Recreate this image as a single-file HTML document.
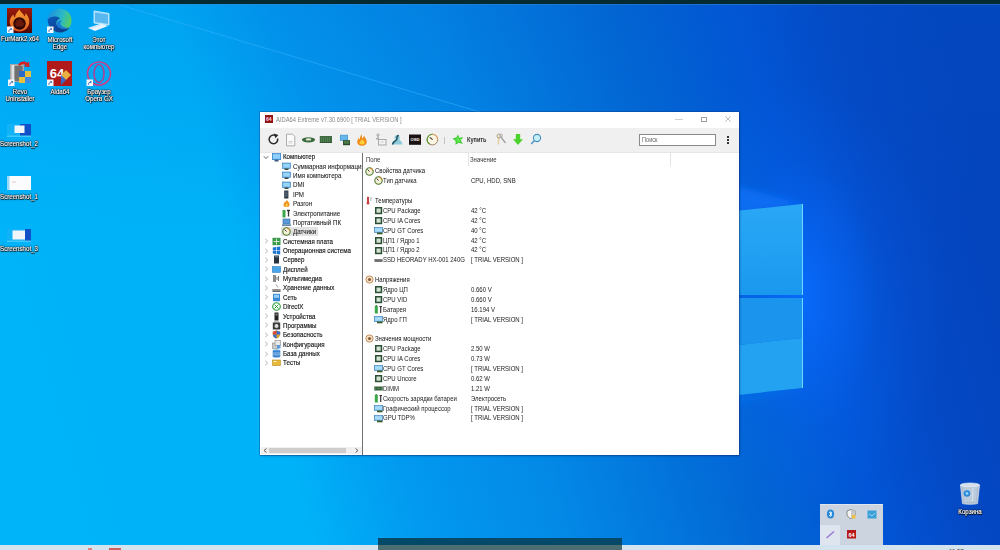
<!DOCTYPE html><html><head><meta charset="utf-8"><style>
*{margin:0;padding:0;box-sizing:border-box}
html,body{width:1000px;height:550px;overflow:hidden}
body{position:relative;font-family:"Liberation Sans",sans-serif;background:#0a78e0}
.a{position:absolute}
#wall{position:absolute;left:0;top:0;width:1000px;height:550px}
#topbar{position:absolute;left:0;top:0;width:1000px;height:4px;background:#032b31;border-bottom:0px}
#taskbar{position:absolute;left:0;top:545px;width:1000px;height:5px;background:#dbe4ec}
.dl{position:absolute;color:#fff;font-size:6.6px;line-height:8px;text-align:center;white-space:nowrap;transform:scaleX(0.93);-webkit-text-stroke:0.15px #fff;text-shadow:0 0 1px #000,0 0 1px #000,0 0 1px #000,0.5px 0.5px 1px #000,0 0 2px #013}
#win{position:absolute;left:260px;top:112px;width:479px;height:343px;background:#fff;overflow:hidden;box-shadow:0 0 0 0.6px rgba(20,50,110,.5),1px 1px 2px rgba(0,20,80,.35)}
.t{position:absolute;font-size:7.6px;line-height:9px;color:#1a1a1a;white-space:nowrap;transform:scaleX(0.79);transform-origin:0 50%}
.b{font-weight:bold}
</style></head><body>
<svg id="wall" width="1000" height="550" viewBox="0 0 1000 550">
<defs>
<linearGradient id="g0" gradientUnits="userSpaceOnUse" x1="0" y1="0" x2="1000" y2="0" gradientTransform="rotate(-15 500 275)">
<stop offset="0" stop-color="#00b4fa"/>
<stop offset="0.25" stop-color="#00b2f8"/>
<stop offset="0.30" stop-color="#01a6f4"/>
<stop offset="0.36" stop-color="#0299f0"/>
<stop offset="0.50" stop-color="#0388e6"/>
<stop offset="0.69" stop-color="#0265d3"/>
<stop offset="0.80" stop-color="#0255d6"/>
<stop offset="0.89" stop-color="#0448c4"/>
<stop offset="1" stop-color="#0444bc"/>
</linearGradient>
<linearGradient id="pane" x1="0" y1="0" x2="0" y2="1">
<stop offset="0" stop-color="#2aa8f6"/><stop offset="1" stop-color="#1a98ee"/>
</linearGradient>
<linearGradient id="pane2" x1="0" y1="0" x2="0" y2="1">
<stop offset="0" stop-color="#1a96ee"/><stop offset="0.45" stop-color="#1c9cf2"/><stop offset="0.5" stop-color="#2cb0fa"/><stop offset="1" stop-color="#30b2fa"/>
</linearGradient>
</defs>
<rect width="1000" height="550" fill="url(#g0)"/>
<linearGradient id="topd" x1="0" y1="0" x2="0" y2="1"><stop offset="0" stop-color="#0058c8" stop-opacity="0.16"/><stop offset="1" stop-color="#0058c8" stop-opacity="0"/></linearGradient>
<rect x="0" y="0" width="1000" height="230" fill="url(#topd)"/>
<path d="M120 5 L480 112" stroke="#3ab8ff" stroke-opacity="0.5" stroke-width="1" fill="none"/>
<radialGradient id="glow" cx="803" cy="296" r="100" gradientUnits="userSpaceOnUse" gradientTransform="translate(803 296) scale(0.75 1.35) translate(-803 -296)"><stop offset="0" stop-color="#0a6cff" stop-opacity="0.75"/><stop offset="0.45" stop-color="#0a6cff" stop-opacity="0.35"/><stop offset="1" stop-color="#0a6cff" stop-opacity="0"/></radialGradient>
<rect x="690" y="150" width="230" height="300" fill="url(#glow)"/>
<filter id="bl" x="-20%" y="-50%" width="140%" height="200%"><feGaussianBlur stdDeviation="3"/></filter>
<radialGradient id="glow2" cx="790" cy="300" r="200" gradientUnits="userSpaceOnUse" gradientTransform="translate(790 300) scale(0.8 1.1) translate(-790 -300)"><stop offset="0" stop-color="#0a6cff" stop-opacity="0.4"/><stop offset="1" stop-color="#0a6cff" stop-opacity="0"/></radialGradient>
<rect x="600" y="60" width="400" height="480" fill="url(#glow2)"/>
<polygon points="600,149 803,204 600,232" fill="#0c76ff" fill-opacity="0.6" filter="url(#bl)"/>
<polygon points="600,440 803,388 600,412" fill="#0a74f0" fill-opacity="0.45" filter="url(#bl)"/>
<polygon points="600,225 802,204 802,295 600,295" fill="url(#pane)"/>
<polygon points="600,298 802,298 802,338 600,360" fill="#1a94ec"/>
<polygon points="600,360 802,338 802,388 600,410" fill="#24a2f2"/>
<line x1="802.5" y1="204" x2="802.5" y2="295" stroke="#70d8ff" stroke-width="1"/>
<line x1="802.5" y1="298" x2="802.5" y2="388" stroke="#70d8ff" stroke-width="1"/>
</svg>
<div id="topbar"></div><div class="a" style="left:0;top:4px;width:1000px;height:1px;background:rgba(60,140,210,.45)"></div>
<div id="win">
<div class="a" style="left:5px;top:3px;width:8px;height:8px;background:#901414"></div>
<div class="a" style="left:6px;top:4px;font-size:5px;line-height:6px;color:#fde;font-weight:bold">64</div>
<div class="t" style="left:16px;top:3px;color:#8a8a8a;font-size:7px;transform:scaleX(0.83)">AIDA64 Extreme v7.30.6900  [ TRIAL VERSION ]</div>
<div class="a" style="left:415px;top:7px;width:8px;height:1px;background:#d0d0d0"></div>
<div class="a" style="left:441px;top:4.5px;width:6px;height:5.5px;border:1px solid #a0a0a0"></div>
<svg class="a" style="left:464.8px;top:4.4px" width="6" height="6"><path d="M0.3 0.3L5.7 5.7M5.7 0.3L0.3 5.7" stroke="#a8a8a8" stroke-width="0.8"/></svg>
<div class="a" style="left:0;top:16px;width:479px;height:25px;background:#f0f0f0;border-bottom:1px solid #e6e6e6"></div>
<svg class="a" style="left:7px;top:21px" width="13" height="13" viewBox="0 0 13 13"><path d="M8.6 2.7A4.3 4.3 0 1 0 10.6 5.5" stroke="#2a2a2a" stroke-width="1.5" fill="none"/><path d="M7 0.6L11.4 2L8.4 5.2Z" fill="#2a2a2a"/></svg>
<svg class="a" style="left:25px;top:21px" width="11" height="14" viewBox="0 0 11 14"><path d="M1.5 1.2H7.5L9.8 3.5V12.8H1.5Z" fill="#fafafa" stroke="#9a9a9a" stroke-width="0.8"/><path d="M3.5 8.5h4M3.5 10h4" stroke="#c8c8c8" stroke-width="0.8"/></svg>
<svg class="a" style="left:41px;top:24px" width="15" height="8" viewBox="0 0 15 8"><ellipse cx="7.5" cy="3.8" rx="6.6" ry="2.6" fill="#3d6a3d"/><ellipse cx="7.5" cy="3.4" rx="2.8" ry="1.2" fill="#dfe8d8"/></svg>
<svg class="a" style="left:59px;top:23px" width="14" height="9" viewBox="0 0 14 9"><rect x="0.8" y="1" width="12.2" height="6.8" fill="#3e6a40"/><path d="M2.5 2v5M4.5 2v5M6.5 2v5M8.5 2v5M10.5 2v5" stroke="#5a8a5a" stroke-width="0.7"/><rect x="0.8" y="7" width="12.2" height="0.8" fill="#2a4a2a"/></svg>
<svg class="a" style="left:79px;top:22px" width="12" height="12" viewBox="0 0 12 12"><rect x="1" y="0.8" width="8" height="6" fill="#4a9ad8"/><rect x="1.8" y="1.5" width="6.4" height="4.4" fill="#6ab8ea"/><rect x="4" y="6.2" width="7" height="5" fill="#2a4a2a"/><rect x="4.8" y="7" width="5.4" height="2.8" fill="#4a7a4a"/></svg>
<svg class="a" style="left:96px;top:22px" width="12" height="12" viewBox="0 0 12 12"><path d="M5.5 0.3C6.2 2 5.2 3 6.8 4.5C7 3.2 7.8 2.5 8.2 1.8C8.5 3.5 10.8 5 10.8 8C10.8 10.3 8.8 11.8 6 11.8C3.2 11.8 1.2 10.3 1.2 8C1.2 6.2 2.2 5 2.8 3.8C3.2 4.8 3.5 5.2 4 5.5C3.8 3.5 4.5 1.8 5.5 0.3Z" fill="#f08c1c"/><path d="M6.2 5.2C7.5 6.5 8.8 7.5 8.5 9.2C8.2 10.6 3.8 10.6 3.6 9.2C3.4 7.8 4.8 7.2 5 6.2C5.5 7 6 6.5 6.2 5.2Z" fill="#ffd23a"/></svg>
<svg class="a" style="left:115px;top:21px" width="12" height="13" viewBox="0 0 12 13"><path d="M3 1.5v4" stroke="#999" stroke-width="1"/><circle cx="3" cy="2" r="1.2" fill="none" stroke="#aaa" stroke-width="0.8"/><rect x="1" y="5" width="3" height="1.5" fill="#aaa"/><rect x="3.5" y="6.5" width="7.5" height="5.5" fill="#f4f4f4" stroke="#a0a0a0" stroke-width="0.9"/><path d="M5 9h4" stroke="#ccc" stroke-width="0.8"/></svg>
<svg class="a" style="left:131px;top:22px" width="12" height="11" viewBox="0 0 12 11"><path d="M0.8 10.5C1 8 2.5 6.5 4.5 6C3.5 5 3.3 3.5 3.8 2.5C4.5 1 6.5 0.5 7.8 1.5C9 2.5 9 4.5 8.2 5.8C10 6.5 11.2 8.2 11.3 10.5Z" fill="#8ccadc"/><path d="M7.8 1.5C6.5 1.5 5.5 3 6 4.5C6.2 5.5 5.2 6.5 4 7.2C2.5 8 1.8 9.2 1.5 10.5" stroke="#1d4858" stroke-width="1.4" fill="none"/></svg>
<svg class="a" style="left:148px;top:22px" width="14" height="11" viewBox="0 0 14 11"><rect x="1" y="0.5" width="12" height="10.3" fill="#1a1210"/><text x="7" y="7.3" font-family="Liberation Sans" font-size="4.2" font-weight="bold" fill="#fff" text-anchor="middle">OSD</text></svg>
<svg class="a" style="left:166px;top:21px" width="13" height="13" viewBox="0 0 13 13"><circle cx="6.4" cy="6.6" r="5.3" fill="#fbf6e4" stroke="#a08060" stroke-width="1"/><path d="M6.4 1.3A5.3 5.3 0 0 0 1.1 6.6A5.3 5.3 0 0 0 4 11.3" stroke="#5a9a3a" stroke-width="1.1" fill="none"/><path d="M6.4 1.3A5.3 5.3 0 0 1 11.7 6.6" stroke="#e0a060" stroke-width="1.1" fill="none"/><path d="M6.6 6.6L3.8 4.4" stroke="#333" stroke-width="1.1"/></svg>
<div class="a" style="left:183.5px;top:24.5px;width:1px;height:7px;background:#c4c4c4"></div>
<svg class="a" style="left:192px;top:22px" width="12" height="11" viewBox="0 0 12 11"><path d="M6 0.5L7.3 3.8L11.2 3.2L8.8 6.3L10.8 10L6.8 8.7L3.5 10.8L3.6 7L0.5 4.5L4.3 3.6Z" fill="#42c832"/><path d="M6 2.5L7 4.8L9.5 4.6L7.9 6.4L9 8.6L6.6 7.8L4.6 9L4.8 6.8L2.8 5.2L5 4.6Z" fill="#5ce84a"/></svg>
<div class="t" style="left:207.2px;top:23.4px;font-weight:bold;font-size:6.5px;transform:scaleX(0.86);color:#333">Купить</div>
<svg class="a" style="left:235px;top:21px" width="12" height="13" viewBox="0 0 12 13"><path d="M3.5 4v7.5" stroke="#e8d0a0" stroke-width="1.6"/><circle cx="4" cy="3" r="2" fill="none" stroke="#b0a080" stroke-width="1"/><path d="M5.5 3.5L10.5 10" stroke="#a0a0a0" stroke-width="1.3"/><circle cx="6" cy="2.5" r="1.5" fill="none" stroke="#aaa" stroke-width="0.8"/></svg>
<svg class="a" style="left:252px;top:21px" width="12" height="13" viewBox="0 0 12 13"><path d="M3.8 1H8.2V6.2H11L6 12L1 6.2H3.8Z" fill="#4cd22c"/></svg>
<svg class="a" style="left:270px;top:21px" width="12" height="12" viewBox="0 0 12 12"><circle cx="7" cy="5" r="3.6" fill="#c4f0fa" stroke="#4a90c0" stroke-width="1.1"/><path d="M4.3 7.8L1.2 11" stroke="#4a90c0" stroke-width="1.4"/></svg>
<div class="a" style="left:379px;top:21.5px;width:77px;height:12px;background:#fff;border:1px solid #8a8a8a"></div>
<div class="t" style="left:381.5px;top:23px;font-size:6.5px;transform:scaleX(0.86);color:#666">Поиск</div>
<div class="a" style="left:466.5px;top:24px;width:2px;height:2px;background:#333"></div>
<div class="a" style="left:466.5px;top:27px;width:2px;height:2px;background:#333"></div>
<div class="a" style="left:466.5px;top:30px;width:2px;height:2px;background:#333"></div>
<div class="a" style="left:1px;top:41px;width:101px;height:302px;background:#fff"></div>
<div class="a" style="left:102px;top:41px;width:1px;height:303px;background:#707070"></div>
<div class="a" style="left:1px;top:335px;width:101px;height:7px;background:#f0f0f0"></div>
<div class="a" style="left:9px;top:336px;width:77px;height:5px;background:#cdcdcd"></div>
<svg class="a" style="left:3px;top:336px" width="5" height="5"><path d="M3.5 0.5L1 2.5L3.5 4.5" stroke="#606060" stroke-width="1" fill="none"/></svg>
<svg class="a" style="left:94px;top:336px" width="5" height="5"><path d="M1.5 0.5L4 2.5L1.5 4.5" stroke="#606060" stroke-width="1" fill="none"/></svg>
<div class="a" style="left:1px;top:41px;width:101px;height:294px;overflow:hidden">
<svg class="a" style="left:2px;top:1.5px" width="6" height="5"><path d="M0.8 1.2L3 3.6L5.2 1.2" stroke="#555" stroke-width="0.9" fill="none"/></svg>
<svg class="a" style="left:10.5px;top:-0.5px" width="9" height="9" viewBox="0 0 9 9"><rect x="0.3" y="0.5" width="8.4" height="6.2" fill="#4aa8ea" stroke="#2a78c0" stroke-width="0.6"/><rect x="1" y="1.2" width="7" height="4.6" fill="#8ed0fa"/><rect x="2.5" y="6.7" width="4" height="1.8" fill="#3a5a7a"/></svg>
<div class="t" style="left:21.5px;top:-0.6px;color:#111;font-size:7.6px;transform:scaleX(0.816);-webkit-text-stroke:0.15px #111">Компьютер</div>
<svg class="a" style="left:20.5px;top:8.86px" width="9" height="9" viewBox="0 0 9 9"><rect x="0.5" y="1" width="8" height="5.5" fill="#5aaee6" stroke="#3a7cb8" stroke-width="0.6"/><rect x="1.2" y="1.8" width="6.6" height="3.8" fill="#9ad4f8"/><rect x="2.5" y="6.5" width="4" height="1.5" fill="#3a4a3a"/></svg>
<div class="t" style="left:31.8px;top:8.76px;font-size:7.6px;transform:scaleX(0.816);-webkit-text-stroke:0.08px #222;color:#222">Суммарная информация</div>
<svg class="a" style="left:20.5px;top:18.22px" width="9" height="9" viewBox="0 0 9 9"><rect x="0.5" y="1" width="8" height="5.5" fill="#5aaee6" stroke="#3a7cb8" stroke-width="0.6"/><rect x="1.2" y="1.8" width="6.6" height="3.8" fill="#9ad4f8"/><rect x="2.5" y="6.5" width="4" height="1.5" fill="#3a4a3a"/></svg>
<div class="t" style="left:31.8px;top:18.12px;font-size:7.6px;transform:scaleX(0.816);-webkit-text-stroke:0.08px #222;color:#222">Имя компьютера</div>
<svg class="a" style="left:20.5px;top:27.58px" width="9" height="9" viewBox="0 0 9 9"><rect x="0.5" y="1" width="8" height="5.5" fill="#5aaee6" stroke="#3a7cb8" stroke-width="0.6"/><rect x="1.2" y="1.8" width="6.6" height="3.8" fill="#9ad4f8"/><rect x="2.5" y="6.5" width="4" height="1.5" fill="#3a4a3a"/></svg>
<div class="t" style="left:31.8px;top:27.48px;font-size:7.6px;transform:scaleX(0.816);-webkit-text-stroke:0.08px #222;color:#222">DMI</div>
<svg class="a" style="left:20.5px;top:36.94px" width="9" height="9" viewBox="0 0 9 9"><rect x="2.2" y="0.5" width="4.2" height="8" fill="#2a3440"/><rect x="2.9" y="1.3" width="2.8" height="5.5" fill="#4a5a6a"/></svg>
<div class="t" style="left:31.8px;top:36.84px;font-size:7.6px;transform:scaleX(0.816);-webkit-text-stroke:0.08px #222;color:#222">IPM</div>
<svg class="a" style="left:20.5px;top:46.3px" width="9" height="9" viewBox="0 0 9 9"><path d="M4.5 0.5C6 2.5 8 4 7.5 6.5C7 8.5 2 8.5 1.5 6.5C1 4.5 3 4 2.8 2.5C4 3.5 4.8 2 4.5 0.5Z" fill="#f09020"/><path d="M4.5 4C5.5 5 6 6 5.5 7.2C5 8 3.8 8 3.5 7.2C3.2 6.2 4 5.5 4.5 4Z" fill="#ffd24a"/></svg>
<div class="t" style="left:31.8px;top:46.2px;font-size:7.6px;transform:scaleX(0.816);-webkit-text-stroke:0.08px #222;color:#222">Разгон</div>
<svg class="a" style="left:20.5px;top:55.66px" width="9" height="9" viewBox="0 0 9 9"><rect x="0.5" y="1" width="3" height="7.5" fill="#3aa84a"/><path d="M5 1.5h3M6.5 1.5v6" stroke="#333" stroke-width="1.3"/></svg>
<div class="t" style="left:31.8px;top:55.56px;font-size:7.6px;transform:scaleX(0.816);-webkit-text-stroke:0.08px #222;color:#222">Электропитание</div>
<svg class="a" style="left:20.5px;top:65.02px" width="9" height="9" viewBox="0 0 9 9"><rect x="1" y="1" width="7" height="5" fill="#5a9ad8" stroke="#3a6aa0" stroke-width="0.6"/><rect x="0" y="6.3" width="9" height="1.8" fill="#6a8ab0"/></svg>
<div class="t" style="left:31.8px;top:64.92px;font-size:7.6px;transform:scaleX(0.816);-webkit-text-stroke:0.08px #222;color:#222">Портативный ПК</div>
<div class="a" style="left:20px;top:74.38px;width:37px;height:9px;background:#e2e2e2"></div>
<svg class="a" style="left:20.5px;top:74.38px" width="9" height="9" viewBox="0 0 9 9"><circle cx="4.5" cy="4.5" r="3.7" fill="#f4f0d8" stroke="#4e7a2e" stroke-width="1.1"/><path d="M4.5 4.5L2.5 2.5" stroke="#222" stroke-width="0.9"/><path d="M5 1.2A3.3 3.3 0 0 1 7.8 4" stroke="#e08a2a" stroke-width="1" fill="none"/></svg>
<div class="t" style="left:31.8px;top:74.28px;font-size:7.6px;transform:scaleX(0.816);-webkit-text-stroke:0.08px #222;color:#222">Датчики</div>
<svg class="a" style="left:3px;top:85.24px" width="5" height="6"><path d="M1.2 0.8L3.6 3L1.2 5.2" stroke="#a0a0a0" stroke-width="0.8" fill="none"/></svg>
<svg class="a" style="left:11px;top:83.74px" width="9" height="9" viewBox="0 0 9 9"><rect x="0.5" y="0.8" width="8" height="7.4" fill="#3a9a4a"/><path d="M1.5 4.5h6M4.5 1.5v6" stroke="#d8f0d8" stroke-width="0.9"/></svg>
<div class="t" style="left:21.7px;top:83.64px;font-size:7.6px;transform:scaleX(0.816);-webkit-text-stroke:0.15px #111;color:#111">Системная плата</div>
<svg class="a" style="left:3px;top:94.6px" width="5" height="6"><path d="M1.2 0.8L3.6 3L1.2 5.2" stroke="#a0a0a0" stroke-width="0.8" fill="none"/></svg>
<svg class="a" style="left:11px;top:93.1px" width="9" height="9" viewBox="0 0 9 9"><path d="M0.8 1.5L4 1v3.2H0.8zM4.6 0.9L8.2 0.4v3.8H4.6zM0.8 4.8H4V8L0.8 7.6zM4.6 4.8h3.6v3.8L4.6 8.1z" fill="#1a74d0"/></svg>
<div class="t" style="left:21.7px;top:93px;font-size:7.6px;transform:scaleX(0.816);-webkit-text-stroke:0.15px #111;color:#111">Операционная система</div>
<svg class="a" style="left:3px;top:103.96px" width="5" height="6"><path d="M1.2 0.8L3.6 3L1.2 5.2" stroke="#a0a0a0" stroke-width="0.8" fill="none"/></svg>
<svg class="a" style="left:11px;top:102.46px" width="9" height="9" viewBox="0 0 9 9"><rect x="2" y="0.5" width="5" height="8" fill="#2a3440"/><rect x="2.7" y="1.3" width="3.6" height="1" fill="#7a8a9a"/></svg>
<div class="t" style="left:21.7px;top:102.36px;font-size:7.6px;transform:scaleX(0.816);-webkit-text-stroke:0.15px #111;color:#111">Сервер</div>
<svg class="a" style="left:3px;top:113.32px" width="5" height="6"><path d="M1.2 0.8L3.6 3L1.2 5.2" stroke="#a0a0a0" stroke-width="0.8" fill="none"/></svg>
<svg class="a" style="left:11px;top:111.82px" width="9" height="9" viewBox="0 0 9 9"><rect x="0.3" y="1.5" width="8.4" height="6" fill="#4aa4e8" stroke="#2a74b8" stroke-width="0.5"/></svg>
<div class="t" style="left:21.7px;top:111.72px;font-size:7.6px;transform:scaleX(0.816);-webkit-text-stroke:0.15px #111;color:#111">Дисплей</div>
<svg class="a" style="left:3px;top:122.68px" width="5" height="6"><path d="M1.2 0.8L3.6 3L1.2 5.2" stroke="#a0a0a0" stroke-width="0.8" fill="none"/></svg>
<svg class="a" style="left:11px;top:121.18px" width="9" height="9" viewBox="0 0 9 9"><rect x="1" y="1" width="3" height="7" fill="#8a8a8a"/><path d="M5 3v3M6.5 2v5" stroke="#555" stroke-width="0.8"/></svg>
<div class="t" style="left:21.7px;top:121.08px;font-size:7.6px;transform:scaleX(0.816);-webkit-text-stroke:0.15px #111;color:#111">Мультимедиа</div>
<svg class="a" style="left:3px;top:132.04px" width="5" height="6"><path d="M1.2 0.8L3.6 3L1.2 5.2" stroke="#a0a0a0" stroke-width="0.8" fill="none"/></svg>
<svg class="a" style="left:11px;top:130.54px" width="9" height="9" viewBox="0 0 9 9"><path d="M4 0.5L6 3.5" stroke="#888" stroke-width="0.8"/><rect x="0.5" y="5" width="8" height="3" fill="#666"/><rect x="1" y="5.5" width="7" height="1" fill="#bbb"/></svg>
<div class="t" style="left:21.7px;top:130.44px;font-size:7.6px;transform:scaleX(0.816);-webkit-text-stroke:0.15px #111;color:#111">Хранение данных</div>
<svg class="a" style="left:3px;top:141.4px" width="5" height="6"><path d="M1.2 0.8L3.6 3L1.2 5.2" stroke="#a0a0a0" stroke-width="0.8" fill="none"/></svg>
<svg class="a" style="left:11px;top:139.9px" width="9" height="9" viewBox="0 0 9 9"><rect x="1" y="0.8" width="7" height="7.4" fill="#3a8ad8"/><rect x="2" y="1.8" width="5" height="3" fill="#9ad0f8"/></svg>
<div class="t" style="left:21.7px;top:139.8px;font-size:7.6px;transform:scaleX(0.816);-webkit-text-stroke:0.15px #111;color:#111">Сеть</div>
<svg class="a" style="left:3px;top:150.76px" width="5" height="6"><path d="M1.2 0.8L3.6 3L1.2 5.2" stroke="#a0a0a0" stroke-width="0.8" fill="none"/></svg>
<svg class="a" style="left:11px;top:149.26px" width="9" height="9" viewBox="0 0 9 9"><circle cx="4.5" cy="4.5" r="3.8" fill="#fff" stroke="#2a9a3a" stroke-width="1.1"/><path d="M2.5 2.5L6.5 6.5M6.5 2.5L2.5 6.5" stroke="#2a9a3a" stroke-width="1"/></svg>
<div class="t" style="left:21.7px;top:149.16px;font-size:7.6px;transform:scaleX(0.816);-webkit-text-stroke:0.15px #111;color:#111">DirectX</div>
<svg class="a" style="left:3px;top:160.12px" width="5" height="6"><path d="M1.2 0.8L3.6 3L1.2 5.2" stroke="#a0a0a0" stroke-width="0.8" fill="none"/></svg>
<svg class="a" style="left:11px;top:158.62px" width="9" height="9" viewBox="0 0 9 9"><rect x="2.5" y="0.5" width="4" height="8" fill="#222"/><rect x="3.3" y="1.5" width="2.4" height="2" fill="#777"/></svg>
<div class="t" style="left:21.7px;top:158.52px;font-size:7.6px;transform:scaleX(0.816);-webkit-text-stroke:0.15px #111;color:#111">Устройства</div>
<svg class="a" style="left:3px;top:169.48px" width="5" height="6"><path d="M1.2 0.8L3.6 3L1.2 5.2" stroke="#a0a0a0" stroke-width="0.8" fill="none"/></svg>
<svg class="a" style="left:11px;top:167.98px" width="9" height="9" viewBox="0 0 9 9"><rect x="0.8" y="1.5" width="7.4" height="7" fill="#3a3a3a"/><circle cx="4.5" cy="5" r="2" fill="#ddd"/><rect x="2" y="0.5" width="5" height="1.2" fill="#888"/></svg>
<div class="t" style="left:21.7px;top:167.88px;font-size:7.6px;transform:scaleX(0.816);-webkit-text-stroke:0.15px #111;color:#111">Программы</div>
<svg class="a" style="left:3px;top:178.84px" width="5" height="6"><path d="M1.2 0.8L3.6 3L1.2 5.2" stroke="#a0a0a0" stroke-width="0.8" fill="none"/></svg>
<svg class="a" style="left:11px;top:177.34px" width="9" height="9" viewBox="0 0 9 9"><path d="M4.5 0.5L8.2 1.8V4.5C8.2 6.5 6.5 7.8 4.5 8.6C2.5 7.8 0.8 6.5 0.8 4.5V1.8Z" fill="#d8a030"/><path d="M4.5 0.5L8.2 1.8V4.5H4.5zM0.8 4.5H4.5V8.6C2.5 7.8 0.8 6.5 0.8 4.5z" fill="#3a6ac8"/><path d="M4.5 0.5L0.8 1.8V4.5H4.5z" fill="#d84a3a"/></svg>
<div class="t" style="left:21.7px;top:177.24px;font-size:7.6px;transform:scaleX(0.816);-webkit-text-stroke:0.15px #111;color:#111">Безопасность</div>
<svg class="a" style="left:3px;top:188.2px" width="5" height="6"><path d="M1.2 0.8L3.6 3L1.2 5.2" stroke="#a0a0a0" stroke-width="0.8" fill="none"/></svg>
<svg class="a" style="left:11px;top:186.7px" width="9" height="9" viewBox="0 0 9 9"><rect x="0.5" y="3" width="6" height="5.5" fill="#ccc" stroke="#888" stroke-width="0.6"/><rect x="3" y="0.5" width="5.5" height="5" fill="#e8e8e8" stroke="#888" stroke-width="0.6"/><rect x="5" y="5" width="3.5" height="3.5" fill="#5a9ad8"/></svg>
<div class="t" style="left:21.7px;top:186.6px;font-size:7.6px;transform:scaleX(0.816);-webkit-text-stroke:0.15px #111;color:#111">Конфигурация</div>
<svg class="a" style="left:3px;top:197.56px" width="5" height="6"><path d="M1.2 0.8L3.6 3L1.2 5.2" stroke="#a0a0a0" stroke-width="0.8" fill="none"/></svg>
<svg class="a" style="left:11px;top:196.06px" width="9" height="9" viewBox="0 0 9 9"><ellipse cx="4.5" cy="1.8" rx="3.8" ry="1.3" fill="#5aa0e0"/><rect x="0.7" y="1.8" width="7.6" height="5.5" fill="#3a84d0"/><ellipse cx="4.5" cy="7.3" rx="3.8" ry="1.3" fill="#3a84d0"/><path d="M0.7 4h7.6M0.7 5.8h7.6" stroke="#cfe6fa" stroke-width="0.6"/></svg>
<div class="t" style="left:21.7px;top:195.96px;font-size:7.6px;transform:scaleX(0.816);-webkit-text-stroke:0.15px #111;color:#111">База данных</div>
<svg class="a" style="left:3px;top:206.92px" width="5" height="6"><path d="M1.2 0.8L3.6 3L1.2 5.2" stroke="#a0a0a0" stroke-width="0.8" fill="none"/></svg>
<svg class="a" style="left:11px;top:205.42px" width="9" height="9" viewBox="0 0 9 9"><rect x="0.5" y="2" width="8" height="5.5" fill="#e8b83a" stroke="#b88a20" stroke-width="0.6"/><rect x="1.5" y="3" width="3" height="1" fill="#fff5d0"/></svg>
<div class="t" style="left:21.7px;top:205.32px;font-size:7.6px;transform:scaleX(0.816);-webkit-text-stroke:0.15px #111;color:#111">Тесты</div>
</div>
<div class="t" style="left:106px;top:43px;color:#333">Поле</div>
<div class="t" style="left:210px;top:43px;color:#333">Значение</div>
<div class="a" style="left:207.5px;top:41px;width:1px;height:13px;background:#e4e4e4"></div>
<div class="a" style="left:409.5px;top:41px;width:1px;height:13px;background:#e4e4e4"></div>
<svg class="a" style="left:105px;top:54.5px" width="9" height="9" viewBox="0 0 9 9"><circle cx="4.5" cy="4.5" r="3.7" fill="#f4f0d8" stroke="#4e7a2e" stroke-width="1.1"/><path d="M4.5 4.5L2.5 2.5" stroke="#222" stroke-width="0.9"/><path d="M5 1.2A3.3 3.3 0 0 1 7.8 4" stroke="#e08a2a" stroke-width="1" fill="none"/></svg>
<div class="t" style="left:115px;top:54.4px;color:#111">Свойства датчика</div>
<svg class="a" style="left:113.5px;top:64.38px" width="9" height="9" viewBox="0 0 9 9"><circle cx="4.5" cy="4.5" r="3.7" fill="#f4f0d8" stroke="#4e7a2e" stroke-width="1.1"/><path d="M4.5 4.5L2.5 2.5" stroke="#222" stroke-width="0.9"/><path d="M5 1.2A3.3 3.3 0 0 1 7.8 4" stroke="#e08a2a" stroke-width="1" fill="none"/></svg>
<div class="t" style="left:123.3px;top:64.28px;">Тип датчика</div>
<div class="t" style="left:210.5px;top:64.28px;">CPU, HDD, SNB</div>
<svg class="a" style="left:105px;top:84.14px" width="9" height="9" viewBox="0 0 9 9"><rect x="2" y="0.8" width="2" height="6" fill="#c84040"/><circle cx="3" cy="7" r="1.5" fill="#c84040"/><path d="M5 2h2M5 4h1.5" stroke="#777" stroke-width="0.7"/></svg>
<div class="t" style="left:115px;top:84.04px;color:#111">Температуры</div>
<svg class="a" style="left:113.5px;top:94.02px" width="9" height="9" viewBox="0 0 9 9"><rect x="1" y="1" width="7.2" height="7.2" fill="#2a4e34"/><rect x="2.5" y="2.5" width="4.2" height="4.2" fill="#d4e4d4"/></svg>
<div class="t" style="left:123.3px;top:93.92px;">CPU Package</div>
<div class="t" style="left:210.5px;top:93.92px;">42 °C</div>
<svg class="a" style="left:113.5px;top:103.9px" width="9" height="9" viewBox="0 0 9 9"><rect x="1" y="1" width="7.2" height="7.2" fill="#2a4e34"/><rect x="2.5" y="2.5" width="4.2" height="4.2" fill="#d4e4d4"/></svg>
<div class="t" style="left:123.3px;top:103.8px;">CPU IA Cores</div>
<div class="t" style="left:210.5px;top:103.8px;">42 °C</div>
<svg class="a" style="left:113.5px;top:113.78px" width="9" height="9" viewBox="0 0 9 9"><rect x="0.3" y="1.5" width="8.4" height="5" fill="#6cb8ea" stroke="#3a7cb8" stroke-width="0.6"/><rect x="1" y="2.2" width="7" height="3.5" fill="#a8dcfa"/><rect x="3" y="6.5" width="5.5" height="1.8" fill="#3b5a2a"/></svg>
<div class="t" style="left:123.3px;top:113.68px;">CPU GT Cores</div>
<div class="t" style="left:210.5px;top:113.68px;">40 °C</div>
<svg class="a" style="left:113.5px;top:123.66px" width="9" height="9" viewBox="0 0 9 9"><rect x="1" y="1" width="7.2" height="7.2" fill="#2a4e34"/><rect x="2.5" y="2.5" width="4.2" height="4.2" fill="#d4e4d4"/></svg>
<div class="t" style="left:123.3px;top:123.56px;">ЦП1 / Ядро 1</div>
<div class="t" style="left:210.5px;top:123.56px;">42 °C</div>
<svg class="a" style="left:113.5px;top:133.54px" width="9" height="9" viewBox="0 0 9 9"><rect x="1" y="1" width="7.2" height="7.2" fill="#2a4e34"/><rect x="2.5" y="2.5" width="4.2" height="4.2" fill="#d4e4d4"/></svg>
<div class="t" style="left:123.3px;top:133.44px;">ЦП1 / Ядро 2</div>
<div class="t" style="left:210.5px;top:133.44px;">42 °C</div>
<svg class="a" style="left:113.5px;top:143.42px" width="9" height="9" viewBox="0 0 9 9"><rect x="0.5" y="4" width="8" height="2.8" fill="#555"/><rect x="1" y="4.5" width="7" height="0.8" fill="#aaa"/></svg>
<div class="t" style="left:123.3px;top:143.32px;">SSD HEORADY HX-001 240G</div>
<div class="t" style="left:210.5px;top:143.32px;">[ TRIAL VERSION ]</div>
<svg class="a" style="left:105px;top:163.18px" width="9" height="9" viewBox="0 0 9 9"><circle cx="4.5" cy="4.5" r="3.6" fill="#f6e6c8" stroke="#c88a58" stroke-width="1"/><circle cx="4.5" cy="4.5" r="1.6" fill="#8a5a3a"/></svg>
<div class="t" style="left:115px;top:163.08px;color:#111">Напряжения</div>
<svg class="a" style="left:113.5px;top:173.06px" width="9" height="9" viewBox="0 0 9 9"><rect x="1" y="1" width="7.2" height="7.2" fill="#2a4e34"/><rect x="2.5" y="2.5" width="4.2" height="4.2" fill="#d4e4d4"/></svg>
<div class="t" style="left:123.3px;top:172.96px;">Ядро ЦП</div>
<div class="t" style="left:210.5px;top:172.96px;">0.660 V</div>
<svg class="a" style="left:113.5px;top:182.94px" width="9" height="9" viewBox="0 0 9 9"><rect x="1" y="1" width="7.2" height="7.2" fill="#2a4e34"/><rect x="2.5" y="2.5" width="4.2" height="4.2" fill="#d4e4d4"/></svg>
<div class="t" style="left:123.3px;top:182.84px;">CPU VID</div>
<div class="t" style="left:210.5px;top:182.84px;">0.660 V</div>
<svg class="a" style="left:113.5px;top:192.82px" width="9" height="9" viewBox="0 0 9 9"><rect x="0.8" y="1" width="3" height="7.5" fill="#3aa84a"/><rect x="1.5" y="0.2" width="1.6" height="1" fill="#2a6a2a"/><path d="M5.5 1.5h2.5M6.7 1.5v6.5" stroke="#333" stroke-width="1.2"/></svg>
<div class="t" style="left:123.3px;top:192.72px;">Батарея</div>
<div class="t" style="left:210.5px;top:192.72px;">16.194 V</div>
<svg class="a" style="left:113.5px;top:202.7px" width="9" height="9" viewBox="0 0 9 9"><rect x="0.3" y="1.5" width="8.4" height="5" fill="#6cb8ea" stroke="#3a7cb8" stroke-width="0.6"/><rect x="1" y="2.2" width="7" height="3.5" fill="#a8dcfa"/><rect x="3" y="6.5" width="5.5" height="1.8" fill="#3b5a2a"/></svg>
<div class="t" style="left:123.3px;top:202.6px;">Ядро ГП</div>
<div class="t" style="left:210.5px;top:202.6px;">[ TRIAL VERSION ]</div>
<svg class="a" style="left:105px;top:222.46px" width="9" height="9" viewBox="0 0 9 9"><circle cx="4.5" cy="4.5" r="3.6" fill="#f6e6c8" stroke="#c88a58" stroke-width="1"/><circle cx="4.5" cy="4.5" r="1.6" fill="#8a5a3a"/></svg>
<div class="t" style="left:115px;top:222.36px;color:#111">Значения мощности</div>
<svg class="a" style="left:113.5px;top:232.34px" width="9" height="9" viewBox="0 0 9 9"><rect x="1" y="1" width="7.2" height="7.2" fill="#2a4e34"/><rect x="2.5" y="2.5" width="4.2" height="4.2" fill="#d4e4d4"/></svg>
<div class="t" style="left:123.3px;top:232.24px;">CPU Package</div>
<div class="t" style="left:210.5px;top:232.24px;">2.50 W</div>
<svg class="a" style="left:113.5px;top:242.22px" width="9" height="9" viewBox="0 0 9 9"><rect x="1" y="1" width="7.2" height="7.2" fill="#2a4e34"/><rect x="2.5" y="2.5" width="4.2" height="4.2" fill="#d4e4d4"/></svg>
<div class="t" style="left:123.3px;top:242.12px;">CPU IA Cores</div>
<div class="t" style="left:210.5px;top:242.12px;">0.73 W</div>
<svg class="a" style="left:113.5px;top:252.1px" width="9" height="9" viewBox="0 0 9 9"><rect x="0.3" y="1.5" width="8.4" height="5" fill="#6cb8ea" stroke="#3a7cb8" stroke-width="0.6"/><rect x="1" y="2.2" width="7" height="3.5" fill="#a8dcfa"/><rect x="3" y="6.5" width="5.5" height="1.8" fill="#3b5a2a"/></svg>
<div class="t" style="left:123.3px;top:252px;">CPU GT Cores</div>
<div class="t" style="left:210.5px;top:252px;">[ TRIAL VERSION ]</div>
<svg class="a" style="left:113.5px;top:261.98px" width="9" height="9" viewBox="0 0 9 9"><rect x="1" y="1" width="7.2" height="7.2" fill="#2a4e34"/><rect x="2.5" y="2.5" width="4.2" height="4.2" fill="#d4e4d4"/></svg>
<div class="t" style="left:123.3px;top:261.88px;">CPU Uncore</div>
<div class="t" style="left:210.5px;top:261.88px;">0.62 W</div>
<svg class="a" style="left:113.5px;top:271.86px" width="9" height="9" viewBox="0 0 9 9"><rect x="0.3" y="2.5" width="8.4" height="4" fill="#2a5a32"/><path d="M1.5 3.5v2M3 3.5v2M4.5 3.5v2M6 3.5v2M7.5 3.5v2" stroke="#7aa07a" stroke-width="0.6"/></svg>
<div class="t" style="left:123.3px;top:271.76px;">DIMM</div>
<div class="t" style="left:210.5px;top:271.76px;">1.21 W</div>
<svg class="a" style="left:113.5px;top:281.74px" width="9" height="9" viewBox="0 0 9 9"><rect x="0.8" y="1" width="3" height="7.5" fill="#3aa84a"/><rect x="1.5" y="0.2" width="1.6" height="1" fill="#2a6a2a"/><path d="M5.5 1.5h2.5M6.7 1.5v6.5" stroke="#333" stroke-width="1.2"/></svg>
<div class="t" style="left:123.3px;top:281.64px;">Скорость зарядки батареи</div>
<div class="t" style="left:210.5px;top:281.64px;">Электросеть</div>
<svg class="a" style="left:113.5px;top:291.62px" width="9" height="9" viewBox="0 0 9 9"><rect x="0.3" y="1.5" width="8.4" height="5" fill="#6cb8ea" stroke="#3a7cb8" stroke-width="0.6"/><rect x="1" y="2.2" width="7" height="3.5" fill="#a8dcfa"/><rect x="3" y="6.5" width="5.5" height="1.8" fill="#3b5a2a"/></svg>
<div class="t" style="left:123.3px;top:291.52px;">Графический процессор</div>
<div class="t" style="left:210.5px;top:291.52px;">[ TRIAL VERSION ]</div>
<svg class="a" style="left:113.5px;top:301.5px" width="9" height="9" viewBox="0 0 9 9"><rect x="0.3" y="1.5" width="8.4" height="5" fill="#6cb8ea" stroke="#3a7cb8" stroke-width="0.6"/><rect x="1" y="2.2" width="7" height="3.5" fill="#a8dcfa"/><rect x="3" y="6.5" width="5.5" height="1.8" fill="#3b5a2a"/></svg>
<div class="t" style="left:123.3px;top:301.4px;">GPU TDP%</div>
<div class="t" style="left:210.5px;top:301.4px;">[ TRIAL VERSION ]</div>
</div>
<svg class="a" style="left:7px;top:8px;" width="25" height="25" viewBox="0 0 25 25"><defs><linearGradient id="fmbg" x1="0" y1="0" x2="0" y2="1"><stop offset="0" stop-color="#9a1a0e"/><stop offset="1" stop-color="#4a0806"/></linearGradient><linearGradient id="fmf" x1="0" y1="0" x2="0" y2="1"><stop offset="0" stop-color="#f8a030"/><stop offset="1" stop-color="#e05a20"/></linearGradient></defs><rect width="25" height="25" fill="url(#fmbg)"/><path d="M12.5 1.5C13.5 4.5 16.5 5.5 17.5 8.5C18.5 7.5 18.5 6 18.3 5C21.5 8 23 12 22 16C21 20.5 17 23.5 12.5 23.5C8 23.5 4 20.5 3 16C2 12 4 8.5 6.5 6.5C6.5 8 7 9 8 9.5C8 6 10.5 4 12.5 1.5Z" fill="url(#fmf)"/><circle cx="12.5" cy="15.5" r="6.2" fill="#2a0604"/><path d="M12.5 9.5L13.8 12.5L15.8 11L15.5 15L17.5 14L16 18.5H9L7.5 14L9.5 15L9.2 11L11.2 12.5Z" fill="#6a1a0a"/><g transform="translate(0,18.5)"><rect x="0" y="0" width="6.5" height="6.5" fill="#f4f8fc"/><path d="M1.8 5.2C2 3.5 3 2.5 4.6 2.4" stroke="#2a5aa8" stroke-width="1" fill="none"/><path d="M3.6 1.3L5.4 2.4L3.8 3.6Z" fill="#2a5aa8"/></g></svg>
<div class="dl" style="left:-10px;top:35px;width:60px">FurMark2 x64</div>
<svg class="a" style="left:47px;top:8px;" width="25" height="25" viewBox="0 0 25 25"><defs><linearGradient id="eg" x1="0" y1="0.3" x2="1" y2="0.6"><stop offset="0" stop-color="#1c8ee0"/><stop offset="0.55" stop-color="#2ab8c8"/><stop offset="1" stop-color="#5ad05a"/></linearGradient><linearGradient id="eb" x1="0" y1="0" x2="0.6" y2="1"><stop offset="0" stop-color="#0a5ab8"/><stop offset="1" stop-color="#0c3f90"/></linearGradient></defs><circle cx="12.5" cy="12.5" r="12" fill="url(#eg)"/><path d="M0.6 12C1 19 6.5 24.5 13 24.5C17.5 24.5 21 22 22.5 19.5C19 21.5 12.5 21.5 10 17.5C8.5 15 9.5 11.5 13 10.5C10 7.5 3 8 0.6 12Z" fill="url(#eb)"/><path d="M10 17.5C12.5 21.5 19 21.5 22.5 19.5C20 20 15 19.5 13.5 16.5C12.8 15 13.5 13.5 15 13C13.5 12 10.5 13 10 15.5Z" fill="#1a7ad8"/><g transform="translate(0,18.5)"><rect x="0" y="0" width="6.5" height="6.5" fill="#f4f8fc"/><path d="M1.8 5.2C2 3.5 3 2.5 4.6 2.4" stroke="#2a5aa8" stroke-width="1" fill="none"/><path d="M3.6 1.3L5.4 2.4L3.8 3.6Z" fill="#2a5aa8"/></g></svg>
<div class="dl" style="left:29.5px;top:35.6px;width:60px">Microsoft</div>
<div class="dl" style="left:29.5px;top:43.2px;width:60px">Edge</div>
<svg class="a" style="left:87px;top:10px;" width="24" height="23" viewBox="0 0 24 23"><path d="M7 1L22 3.5V15L7 13Z" fill="#9ad8fa" stroke="#d8f2ff" stroke-width="0.8"/><path d="M8 2.5L21 4.5V13.8L8 12Z" fill="#5ab8f0"/><path d="M1 18L14 13.5L21 16L8 21Z" fill="#e8f4fc"/><path d="M3 18.5L14 14.5" stroke="#b8d8ec" stroke-width="0.6"/></svg>
<div class="dl" style="left:69px;top:35.6px;width:60px">Этот</div>
<div class="dl" style="left:69px;top:43.2px;width:60px">компьютер</div>
<svg class="a" style="left:8px;top:60px;" width="24" height="26" viewBox="0 0 24 26"><rect x="2" y="4" width="14" height="18" fill="#a8a8a8"/><rect x="3.5" y="5" width="3" height="16" fill="#e0e0e0"/><rect x="6.5" y="6" width="8" height="15" fill="#707070"/><path d="M10 5C12 1 17 0.5 19.5 3L21 1.5L21.5 7L16 6.5L17.8 5C16 3.5 13 4 12 6Z" fill="#d82020"/><rect x="11" y="11" width="6" height="6" fill="#2a6ac8"/><rect x="17" y="11" width="6" height="6" fill="#e8c040"/><rect x="11" y="17" width="6" height="6" fill="#e8c040"/><rect x="17" y="17" width="6" height="6" fill="#3a8ae8"/><g transform="translate(0,19.5)"><rect x="0" y="0" width="6.5" height="6.5" fill="#f4f8fc"/><path d="M1.8 5.2C2 3.5 3 2.5 4.6 2.4" stroke="#2a5aa8" stroke-width="1" fill="none"/><path d="M3.6 1.3L5.4 2.4L3.8 3.6Z" fill="#2a5aa8"/></g></svg>
<div class="dl" style="left:-10px;top:87.6px;width:60px">Revo</div>
<div class="dl" style="left:-10px;top:95.4px;width:60px">Uninstaller</div>
<svg class="a" style="left:47px;top:61px;" width="25" height="25" viewBox="0 0 25 25"><rect width="25" height="25" fill="#b01a1a"/><text x="10" y="17" font-family="Liberation Sans" font-size="13" font-weight="bold" fill="#fff" text-anchor="middle">64</text><path d="M14 14L19 9L24 14L19 19Z" fill="#e8b040"/><path d="M14 14L19 19L14 24Z" fill="#3a6ac8"/><g transform="translate(0,18.5)"><rect x="0" y="0" width="6.5" height="6.5" fill="#f4f8fc"/><path d="M1.8 5.2C2 3.5 3 2.5 4.6 2.4" stroke="#2a5aa8" stroke-width="1" fill="none"/><path d="M3.6 1.3L5.4 2.4L3.8 3.6Z" fill="#2a5aa8"/></g></svg>
<div class="dl" style="left:29.5px;top:87.6px;width:60px">Aida64</div>
<svg class="a" style="left:86px;top:61px;" width="26" height="25" viewBox="0 0 26 25"><ellipse cx="13" cy="12.5" rx="11.5" ry="11.5" fill="none" stroke="#c8408a" stroke-width="1.6"/><ellipse cx="13" cy="12.5" rx="5" ry="9" fill="none" stroke="#b04090" stroke-width="1.5"/><g transform="translate(0.5,18.5)"><rect x="0" y="0" width="6.5" height="6.5" fill="#f4f8fc"/><path d="M1.8 5.2C2 3.5 3 2.5 4.6 2.4" stroke="#2a5aa8" stroke-width="1" fill="none"/><path d="M3.6 1.3L5.4 2.4L3.8 3.6Z" fill="#2a5aa8"/></g></svg>
<div class="dl" style="left:69px;top:87.6px;width:60px">Браузер</div>
<div class="dl" style="left:69px;top:95.4px;width:60px">Opera GX</div>
<svg class="a" style="left:7px;top:124px;" width="24" height="13" viewBox="0 0 24 13"><rect width="24" height="13" fill="#12b2f6"/><rect x="13" y="0" width="11" height="13" fill="#1050c8"/><rect x="7.5" y="1.5" width="10" height="7.5" fill="#f0f6fa"/><rect x="0" y="11.5" width="24" height="1.5" fill="#40c8f8"/></svg>
<div class="dl" style="left:-11px;top:139.6px;width:60px">Screenshot_2</div>
<svg class="a" style="left:7px;top:175.5px;" width="24" height="14" viewBox="0 0 24 14"><rect width="24" height="14" fill="#fafcfe"/><rect x="0" y="0" width="2.5" height="14" fill="#9ad8f8"/><path d="M5 6h4" stroke="#e8a0a0" stroke-width="0.6"/></svg>
<div class="dl" style="left:-11px;top:192.5px;width:60px">Screenshot_1</div>
<svg class="a" style="left:7px;top:229px;" width="24" height="13" viewBox="0 0 24 13"><rect width="24" height="13" fill="#12b2f6"/><rect x="18" y="0" width="6" height="13" fill="#1050c8"/><rect x="5.5" y="1.5" width="12.5" height="9" fill="#f0f6fa"/><rect x="0" y="11.5" width="24" height="1.5" fill="#40c8f8"/></svg>
<div class="dl" style="left:-11px;top:245px;width:60px">Screenshot_3</div>
<svg class="a" style="left:959px;top:482px;" width="22" height="23" viewBox="0 0 22 23"><path d="M1.5 3L20.5 3L18.5 21.5C16 22.5 6 22.5 3.5 21.5Z" fill="#aebfd2" stroke="#dfe9f4" stroke-width="0.7"/><ellipse cx="11" cy="3" rx="9.5" ry="2" fill="#d4dfea" stroke="#eef4fa" stroke-width="0.6"/><path d="M4 5L18 5L16.8 20H5.2Z" fill="#bccbdb"/><path d="M14 6L13.5 19" stroke="#d8e4f0" stroke-width="1"/><circle cx="8" cy="11.5" r="3.3" fill="#2a8ad8"/><circle cx="8" cy="11.5" r="1.4" fill="#8fd0fa"/></svg>
<div class="dl" style="left:940px;top:507.8px;width:60px">Корзина</div>
<div class="a" style="left:819.5px;top:503.5px;width:63px;height:42px;background:#cbd4df;border-top:1px solid #dfe6ee"></div>
<div class="a" style="left:819.5px;top:525px;width:20.5px;height:20px;background:#dfe5ee"></div>
<svg class="a" style="left:826px;top:509px;" width="9" height="10" viewBox="0 0 9 10"><ellipse cx="4.5" cy="5" rx="3.6" ry="4.5" fill="#2a88d8"/><path d="M3 3L6 6L4.5 7.5V2.5L6 4L3 7" stroke="#fff" stroke-width="0.7" fill="none"/></svg>
<svg class="a" style="left:846px;top:509px;" width="10" height="10" viewBox="0 0 10 10"><path d="M5 0.5L9 2V5C9 7.5 7 9 5 9.7C3 9 1 7.5 1 5V2Z" fill="#f4f4f4" stroke="#666" stroke-width="0.7"/><path d="M5 0.5V9.7C7 9 9 7.5 9 5V2Z" fill="#c8c8c8"/><rect x="6" y="6" width="3.5" height="3.5" fill="#f0c040"/></svg>
<svg class="a" style="left:867px;top:510px;" width="10" height="9" viewBox="0 0 10 9"><rect x="0.5" y="0.5" width="9" height="8" fill="#3aa0d8"/><path d="M2 4L5 6L8 3" stroke="#a8e0f8" stroke-width="0.8" fill="none"/></svg>
<svg class="a" style="left:825px;top:530px;" width="10" height="9" viewBox="0 0 10 9"><path d="M1.5 8L9 1.5" stroke="#9a7ad8" stroke-width="1.6"/></svg>
<svg class="a" style="left:846.5px;top:530px;" width="9" height="9" viewBox="0 0 9 9"><rect width="9" height="8.5" fill="#b81818"/><text x="4.5" y="6.5" font-family="Liberation Sans" font-size="5.5" font-weight="bold" fill="#fff" text-anchor="middle">64</text></svg>
<div class="a" style="left:0;top:545px;width:1000px;height:5px;background:#d4e4ef"></div>
<div class="a" style="left:378px;top:538px;width:244px;height:7px;background:#044a68"></div>
<div class="a" style="left:378px;top:545px;width:244px;height:5px;background:#4a6e72"></div>
<div class="a" style="left:88px;top:548px;width:4px;height:2px;background:#e08080"></div>
<div class="a" style="left:109px;top:548px;width:12px;height:2px;background:#d06060"></div>
<div class="a" style="left:949px;top:547.5px;font-size:6px;line-height:6px;color:#333">11:57</div>
</body></html>
